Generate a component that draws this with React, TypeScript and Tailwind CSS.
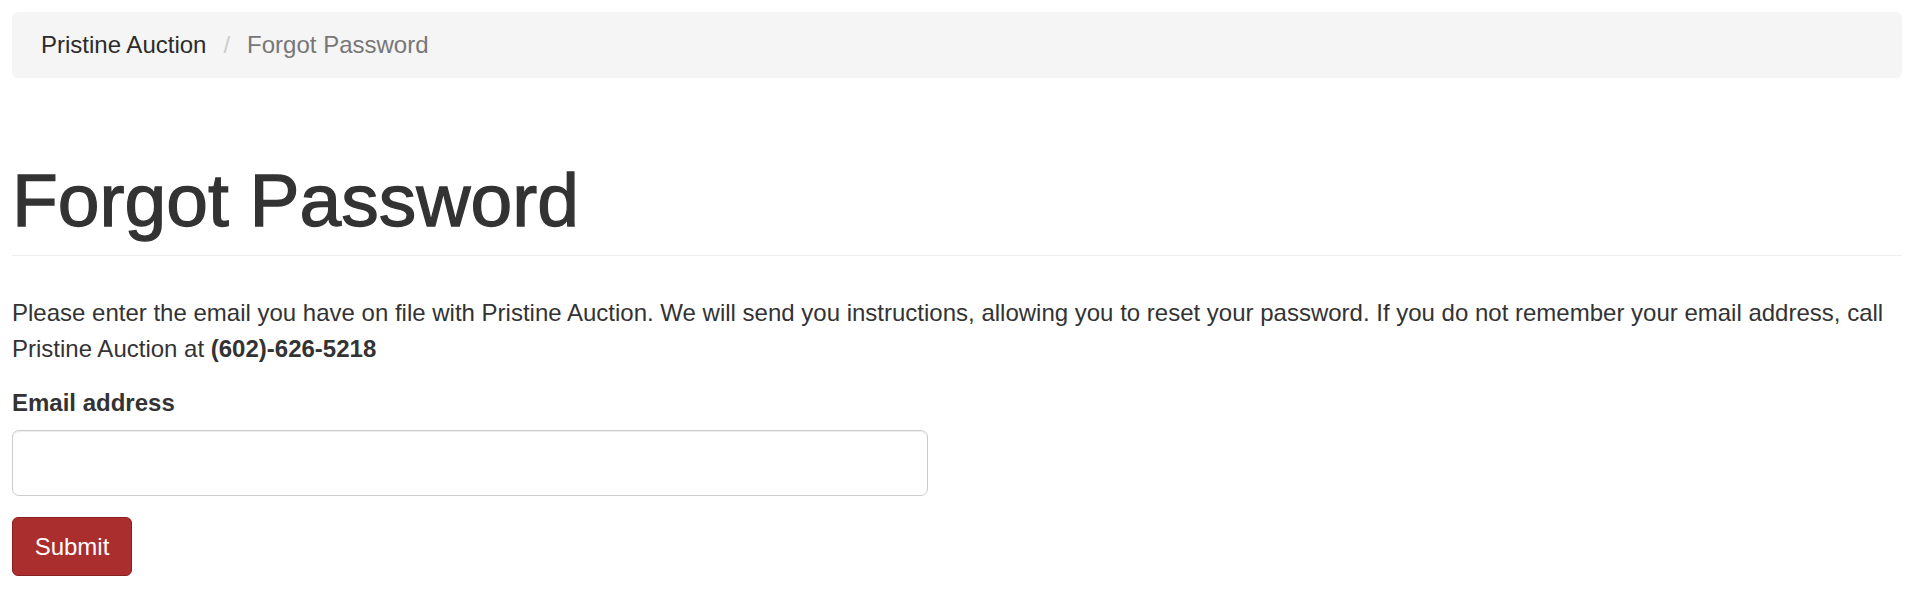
import React from 'react';

const Breadcrumb = () => (
  <ol className="flex items-center h-[66px] px-[29px] bg-[#f5f5f5] rounded-[6px] text-[24px] leading-none">
    <li className="text-[#2b2b2b]">Pristine Auction</li>
    <li className="mx-[17px] text-[#cccccc]">/</li>
    <li className="text-[#777777]">Forgot Password</li>
  </ol>
);

const ForgotPasswordForm = () => {
  const [email, setEmail] = React.useState('');

  return (
    <form onSubmit={e => e.preventDefault()}>
      <label htmlFor="email" className="block mt-[19px] mb-[10px] font-bold text-[24px] leading-[34px] text-[#333333]">
        Email address
      </label>
      <input
        id="email"
        type="email"
        value={email}
        onChange={e => setEmail(e.target.value)}
        className="block w-[916px] h-[66px] px-[20px] bg-white border border-[#cccccc] rounded-[7px] shadow-[inset_0_1px_1px_rgba(0,0,0,0.075)] text-[24px] text-[#555555] outline-none"
      />
      <button
        type="submit"
        className="mt-[21px] w-[120px] h-[59px] bg-[#ab2e2e] border border-[#8a2121] rounded-[6px] text-white text-[24px] leading-none"
      >
        Submit
      </button>
    </form>
  );
};

export default function App() {
  return (
    <div className="min-h-[594px] bg-white pt-[12px] pl-[12px] pr-[18px] font-['Liberation_Sans',Arial,Helvetica,sans-serif] text-[#333333]">
      <Breadcrumb />

      <div className="mt-[81px] pb-[14px] border-b border-[#eeeeee]">
        <h1 className="text-[75px] leading-[82px] text-[#333333] [-webkit-text-stroke:1.3px_#333333]">Forgot Password</h1>
      </div>

      <p className="mt-[39px] text-[24px] leading-[36px]">
        Please enter the email you have on file with Pristine Auction. We will send you instructions, allowing you to
        reset your password. If you do not remember your email address, call Pristine Auction at{' '}
        <strong>(602)-626-5218</strong>
      </p>

      <ForgotPasswordForm />
    </div>
  );
}
